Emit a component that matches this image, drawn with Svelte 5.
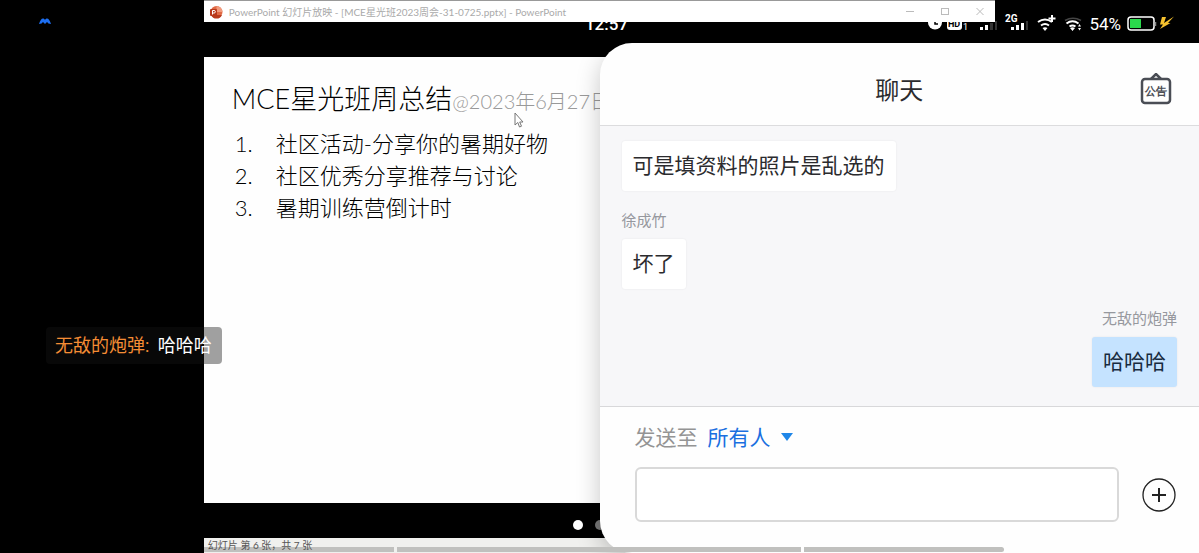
<script>
	let recipient = 'all'
	let draft = ''

	const topics = [
		'社区活动-分享你的暑期好物',
		'社区优秀分享推荐与讨论',
		'暑期训练营倒计时'
	]

	const messages = [
		{ text: '可是填资料的照片是乱选的' },
		{ name: '徐成竹', text: '坏了' },
		{ name: '无敌的炮弹', text: '哈哈哈', mine: true }
	]
</script>

<div class="room">
	<div class="rail">
		<svg class="logo" width="12" height="7" viewBox="0 0 12 7">
			<path d="M0 6C1 2.500 2.500 .5 4 .5c.8 0 1.500.5 2 1.500C6.500 1 7.200.5 8 .5c1.500 0 3 2 4 5.500L9.500 5.500 8 4 6 6 4 4 2.500 5.500z" fill="#1d6ff2" />
		</svg>
	</div>

	<main class="share">
		<header class="titlebar">
			<svg width="14" height="14" viewBox="0 0 14 14">
				<circle cx="7.500" cy="7" r="6" fill="#e06a45" />
				<path d="M7.500 1a6 6 0 0 1 6 6h-6z" fill="#f29a7c" />
				<path d="M2 10a6 6 0 0 0 11 0z" fill="#b83a1c" />
				<rect x="1" y="4" width="7" height="7" rx="1" fill="#b8381b" />
				<path d="M3.500 9.500v-4h1.600a1.200 1.200 0 0 1 0 2.500H3.500" fill="none" stroke="#fff" />
			</svg>
			<span class="file">PowerPoint 幻灯片放映 - [MCE星光班2023周会-31-0725.pptx] - PowerPoint</span>
			<svg class="winctl" width="80" height="10" viewBox="0 0 80 10" fill="none" stroke="#bbb">
				<path d="M1 4.500h8M71.500 1l7 7M78.500 1l-7 7" />
				<rect x="36.500" y="1.500" width="7" height="6" />
			</svg>
		</header>

		<section class="slide">
			<h1>MCE星光班周总结<small>@2023年6月27日</small></h1>
			<ol>
				{#each topics as topic, i}
					<li><span class="num">{i + 1}.</span>{topic}</li>
				{/each}
			</ol>
			<svg class="cursor" width="10" height="16" viewBox="0 0 10 16">
				<path d="M1 1v12l2.800-2.500L5.500 15l2-.8L5.700 10H9z" fill="#fff" stroke="#777" />
			</svg>
		</section>

		<div class="dots"><i class="on"></i><i></i></div>
		<footer class="strip"><span>幻灯片 第 6 张，共 7 张</span></footer>
	</main>

	<div class="bars"><i></i><i></i><i></i></div>

	<div class="status">
		<time>12:57</time>
		<div class="icons">
			<svg width="156" height="22" viewBox="0 0 156 22" fill="#fff">
				<circle cx="8" cy="9.500" r="7" />
				<path d="M8 6v5h3" fill="none" stroke="#000" stroke-width="1.500" />
				<rect x="20" y="4" width="15" height="13" rx="3" />
				<text x="21" y="14" font-size="9" font-weight="700" fill="#000">HD</text>
				<text x="36" y="17" font-size="9">1</text>
				<path d="M53 14h3v3h-3zM58 12h3v5h-3z" />
				<path d="M63 10h3v7h-3zM68 8h2v9h-2z" fill="#333" />
				<text x="78" y="9" font-size="10" font-weight="700">2G</text>
				<path d="M84 14h3v3h-3zM89 12h3v5h-3zM94 10h3v7h-3z" />
				<path d="M99 8h2v9h-2z" fill="#333" />
				<g fill="none" stroke="#fff" stroke-width="2">
					<path d="M111 9q7-5 14 0M114 12.500q4-3 8 0" />
					<path d="M125 2v7M121.500 5.500h7" stroke-width="2" />
					<path d="M138 7.500q8-4.500 16 0" stroke="#444" stroke-width="1.500" />
					<path d="M139.500 10.500q6-4.500 12 0M142.500 13.500q3-2 6 0" />
				</g>
				<path d="M115.500 15q2.500-1.500 5 0l-2.500 3zM143 15q2.500-1.500 5 0l-2.500 3z" />
				<path d="M151 13.500l1.500-2.500 1.500 2.500zM151 15l1.500 2.500 1.500-2.500z" />
			</svg>
			<span>54%</span>
			<svg width="50" height="18" viewBox="0 0 50 18">
				<rect x="1" y="2" width="26" height="13" rx="3" fill="none" stroke="#fff" stroke-width="1.500" />
				<rect x="3" y="4" width="11" height="9" fill="#2bd84c" />
				<path d="M28.500 7v4" stroke="#888" stroke-width="1.500" />
				<path d="M35 2h4l-2 6 10-6.500-6 6.500h2.500L33 14l3-4.500h-3z" fill="#f5c12e" />
			</svg>
		</div>
	</div>

	<p class="float"><b>无敌的炮弹:</b> 哈哈哈</p>

	<aside class="chat">
		<header>
			<h2>聊天</h2>
			<button class="notice" aria-label="公告">
				<svg width="32" height="32" viewBox="0 0 32 32">
					<path d="M11 6l5-5 5 5" fill="none" stroke="#4a4d55" stroke-width="2.500" />
					<rect x="2" y="6" width="28" height="24" rx="3" fill="none" stroke="#4a4d55" stroke-width="2.500" />
					<text x="5" y="22" font-size="11" font-weight="700" fill="#4a4d55">公告</text>
				</svg>
			</button>
		</header>

		<ul class="log">
			{#each messages as message}
				<li class:mine={message.mine}>
					{#if message.name}
						<span class="name">{message.name}</span>
					{/if}
					<p>{message.text}</p>
				</li>
			{/each}
		</ul>

		<form on:submit|preventDefault>
			<div class="to">
				<label for="recipient">发送至</label>
				<select id="recipient" bind:value={recipient}>
					<option value="all">所有人</option>
				</select>
				<svg width="12" height="10" viewBox="0 0 12 10"><path d="M0 0h12L6 8z" fill="#1f86e8" /></svg>
			</div>
			<div class="compose">
				<input type="text" aria-label="聊天" autocomplete="off" bind:value={draft} />
				<button type="button" class="more" aria-label="+">
					<svg width="34" height="34" viewBox="0 0 34 34" fill="none" stroke="#222">
						<circle cx="17" cy="17" r="16" stroke-width="1.300" />
						<path d="M10 17h14M17 10v14" stroke-width="2" />
					</svg>
				</button>
			</div>
		</form>
	</aside>
</div>

<style>
	:global(body) {
		margin: 0;
		background: #000;
	}

	.room {
		position: relative;
		display: flex;
		min-height: 100vh;
		overflow: hidden;
		background: #000;
		font-family: Roboto, "Noto Sans CJK SC", sans-serif;
	}

	h1, h2, p, ul, ol {
		margin: 0;
		padding: 0;
		font-weight: 400;
		list-style: none;
	}

	svg {
		display: block;
		flex: none;
	}

	button {
		padding: 0;
		border: 0;
		background: none;
		cursor: pointer;
	}

	.rail {
		width: 17%;
	}

	.logo {
		margin: 18px 0 0 39px;
	}

	.share {
		flex: 1;
		display: flex;
		flex-direction: column;
	}

	.titlebar {
		position: relative;
		z-index: 2;
		display: flex;
		align-items: center;
		box-sizing: border-box;
		width: 79.5%;
		height: 22px;
		padding: 0 10px 0 5px;
		border-top: 1px solid #999;
		background: #fff;
		color: #aaa;
		font: 10px Lato, "Noto Sans CJK SC", sans-serif;
	}

	.file {
		margin-left: 6px;
		white-space: nowrap;
	}

	.winctl {
		margin-left: auto;
	}

	.slide {
		position: relative;
		flex: 1;
		margin-top: 35px;
		padding: 24px 0 0 28px;
		background: #fefefe;
		color: #000;
		font-family: Lato, "Noto Sans CJK SC", sans-serif;
	}

	h1 {
		font-size: 27px;
		font-weight: 300;
		line-height: 36px;
		white-space: nowrap;
	}

	small {
		color: #999;
		font-size: 20px;
	}

	ol {
		margin-top: 9px;
		font-size: 22px;
		font-weight: 300;
		line-height: 32px;
	}

	ol li {
		display: flex;
	}

	.num {
		width: 41px;
		padding-left: 3px;
	}

	.cursor {
		position: absolute;
		top: 55px;
		left: 310px;
	}

	.dots {
		display: flex;
		align-items: center;
		gap: 12px;
		height: 35px;
		padding: 9px 0 0 37.100%;
		box-sizing: border-box;
	}

	.dots i {
		width: 10px;
		height: 10px;
		border-radius: 50%;
		background: #777;
	}

	.dots .on {
		background: #fff;
	}

	.strip {
		height: 15px;
		padding-left: 4px;
		background: #f0f0ee;
		color: #555;
		font: 10px/15px Lato, "Noto Sans CJK SC", sans-serif;
	}

	/* page caption stays readable above the bars */
	.strip span {
		position: relative;
		z-index: 3;
	}

	.bars {
		position: absolute;
		z-index: 2;
		right: 0;
		bottom: 1px;
		left: 17%;
		display: grid;
		grid-template-columns: 19.100% 40.600% 20.100%;
		column-gap: 3px;
	}

	.bars i {
		height: 5px;
		background: #c0c0be;
	}

	.bars i:last-child {
		border-radius: 0 3px 3px 0;
	}

	.status {
		position: absolute;
		top: 0;
		right: 0;
		left: 0;
		height: 43px;
		color: #fff;
		font-size: 17px;
		line-height: 20px;
	}

	time {
		display: block;
		padding-top: 14px;
		padding-left: 14px;
		text-align: center;
		font-weight: 500;
	}

	.icons {
		position: absolute;
		top: 13px;
		right: 22px;
		display: flex;
		align-items: center;
		gap: 6px;
	}

	.float {
		position: absolute;
		top: 327px;
		left: 46px;
		padding: 1px 10px 0 9px;
		border-radius: 4px;
		background: rgba(20, 20, 20, .4);
		color: #fff;
		font-size: 18px;
		line-height: 36px;
	}

	.float b {
		margin-right: 4px;
		color: #f58d35;
		font-weight: 400;
	}

	.chat {
		position: absolute;
		z-index: 1;
		top: 43px;
		right: 0;
		bottom: 0;
		left: 50%;
		display: flex;
		flex-direction: column;
		overflow: hidden;
		border-radius: 32px 0 0 32px;
		background: #fefefe;
		box-shadow: 0 8px 24px rgba(0, 0, 0, .22);
		color: #2b2b2e;
		font-size: 21px;
	}

	.chat header {
		display: flex;
		align-items: center;
		height: 83px;
		padding: 9px 27px 0 59px;
		border-bottom: 1px solid #dcdcde;
		box-sizing: border-box;
	}

	h2 {
		flex: 1;
		font-size: 24px;
		text-align: center;
	}

	.log {
		display: flex;
		flex: 1;
		flex-direction: column;
		padding: 15px 22px 0;
		background: #f7f7f9;
	}

	.log li {
		display: flex;
		flex-direction: column;
		align-items: flex-start;
		margin-bottom: 19px;
	}

	.log li:last-child {
		margin-bottom: 0;
	}

	.log .mine {
		align-items: flex-end;
	}

	.name {
		margin-bottom: 7px;
		color: #96989e;
		font-size: 15px;
		line-height: 22px;
	}

	.log p {
		padding: 0 11px;
		border-radius: 3px;
		background: #fff;
		box-shadow: 0 0 2px rgba(0, 0, 0, .08);
		line-height: 50px;
	}

	.mine p {
		background: #c5e3ff;
		color: #182b40;
	}

	form {
		height: 147px;
		padding: 16px 23px 0 35px;
		border-top: 1px solid #d8d8da;
		box-sizing: border-box;
	}

	.to {
		display: flex;
		align-items: center;
		line-height: 30px;
	}

	label {
		color: #949494;
	}

	select {
		margin: 0 10px;
		padding: 0;
		border: 0;
		appearance: none;
		background: none;
		color: #1a6fe0;
		font: inherit;
	}

	.compose {
		display: flex;
		align-items: center;
		gap: 23px;
		margin-top: 14px;
	}

	input {
		flex: 1;
		height: 55px;
		padding: 0 12px;
		border: 2px solid #d9d9d9;
		border-radius: 6px;
		box-sizing: border-box;
		background: #fff;
		font: inherit;
	}
</style>
